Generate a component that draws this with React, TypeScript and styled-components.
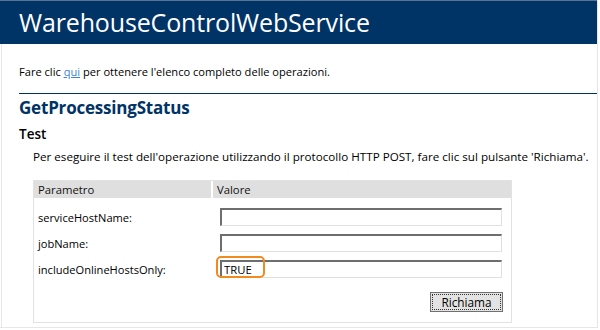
import styled, { createGlobalStyle } from 'styled-components';

const GlobalStyle = createGlobalStyle`
    body {
        margin:0;
        background:#fff;
        font-family:"Segoe UI", "Open Sans", "Noto Sans", sans-serif;
        color:#000;
    }
`

const Page = styled.div`
    width:598px;
    height:328px;
    box-sizing:border-box;
    border-right:1px solid #e6e6e6;
    border-bottom:1px solid #e6e6e6;
    overflow:hidden;
`

const Banner = styled.header`
    height:44px;
    box-sizing:border-box;
    background:#003366;
    border-top:1px solid #5a7394;
    color:#fff;
    font-size:25px;
    line-height:40px;
    padding:1px 0 0 19px;
    letter-spacing:-0.15px;
`

const Content = styled.div`
    margin-left:1px;
    border-left:1px solid #e6e6e6;
    height:283px;
    padding:0 0 0 17px;
`

const Intro = styled.p`
    margin:0;
    padding-top:20px;
    font-size:11.1px;
    line-height:16px;
    a {
        color:#3a86d4;
        text-decoration:underline;
    }
`

const Rule = styled.hr`
    border:none;
    border-top:1px solid #003366;
    margin:13px 0 0 0;
`

const OpTitle = styled.h2`
    margin:0;
    padding-top:3px;
    color:#003366;
    font-size:17px;
    font-weight:700;
    line-height:22px;
    letter-spacing:-0.2px;
`

const SubTitle = styled.h3`
    margin:0;
    padding-top:6px;
    font-size:13.5px;
    font-weight:600;
    line-height:18px;
`

const Note = styled.p`
    margin:0;
    padding:6px 0 0 14px;
    font-size:11.65px;
    line-height:16px;
    white-space:nowrap;
`

const Form = styled.div`
    margin:15px 0 0 14px;
    width:479px;
    box-sizing:border-box;
    border:1px solid #e2e2e2;
    font-size:11.1px;
`

const Grid = styled.div<{ $head?: boolean }>`
    display:grid;
    grid-template-columns:177px 1fr;
    column-gap:2px;
    height:${p => p.$head ? '17px' : '26px'};
    align-items:center;
`

const HeadCell = styled.div`
    background:#dfdfdf;
    height:100%;
    padding-left:4px;
    line-height:17px;
    color:#111;
    font-size:11.3px;
`

const Label = styled.div`
    padding-left:4px;
`

const Body = styled.div`
    padding-top:6px;
`

const InputCell = styled.div`
    position:relative;
    padding:0 9px 0 7px;
`

const Field = styled.input`
    display:block;
    width:100%;
    height:18px;
    box-sizing:border-box;
    border-top:2px solid #6e6e6e;
    border-left:2px solid #6e6e6e;
    border-right:1px solid #e0e0e0;
    border-bottom:1px solid #e0e0e0;
    padding:0 0 0 2px;
    font-family:inherit;
    font-size:11.3px;
    color:#000;
    outline:none;
`

const Ring = styled.span`
    position:absolute;
    left:3px;
    top:-4px;
    width:49px;
    height:22px;
    box-sizing:border-box;
    border:2px solid #f28a1c;
    border-radius:5px;
    pointer-events:none;
`

const Actions = styled.div`
    display:flex;
    justify-content:flex-end;
    padding:10px 8px 10px 0;
`

const Invoke = styled.button`
    width:73px;
    height:20px;
    box-sizing:border-box;
    background:#e3e3e3;
    border:1px solid #707070;
    outline:1px dotted #333;
    outline-offset:-3px;
    font-family:inherit;
    font-size:11.8px;
    padding:0;
    color:#000;
`

const params = [
    { name: 'serviceHostName', value: '' },
    { name: 'jobName', value: '' },
    { name: 'includeOnlineHostsOnly', value: 'TRUE', marked: true },
]

function App() {
    return (
        <>
            <GlobalStyle />
            <Page>
                <Banner>WarehouseControlWebService</Banner>
                <Content>
                    <Intro>Fare clic <a href="#">qui</a> per ottenere l'elenco completo delle operazioni.</Intro>
                    <Rule />
                    <OpTitle>GetProcessingStatus</OpTitle>
                    <SubTitle>Test</SubTitle>
                    <Note>Per eseguire il test dell'operazione utilizzando il protocollo HTTP POST, fare clic sul pulsante 'Richiama'.</Note>
                    <Form>
                        <Grid $head>
                            <HeadCell>Parametro</HeadCell>
                            <HeadCell>Valore</HeadCell>
                        </Grid>
                        <Body>
                            {params.map(p =>
                                <Grid key={p.name}>
                                    <Label>{p.name}:</Label>
                                    <InputCell>
                                        <Field type="text" defaultValue={p.value} />
                                        {p.marked && <Ring />}
                                    </InputCell>
                                </Grid>
                            )}
                        </Body>
                        <Actions>
                            <Invoke type="button">Richiama</Invoke>
                        </Actions>
                    </Form>
                </Content>
            </Page>
        </>
    )
}

export default App;
